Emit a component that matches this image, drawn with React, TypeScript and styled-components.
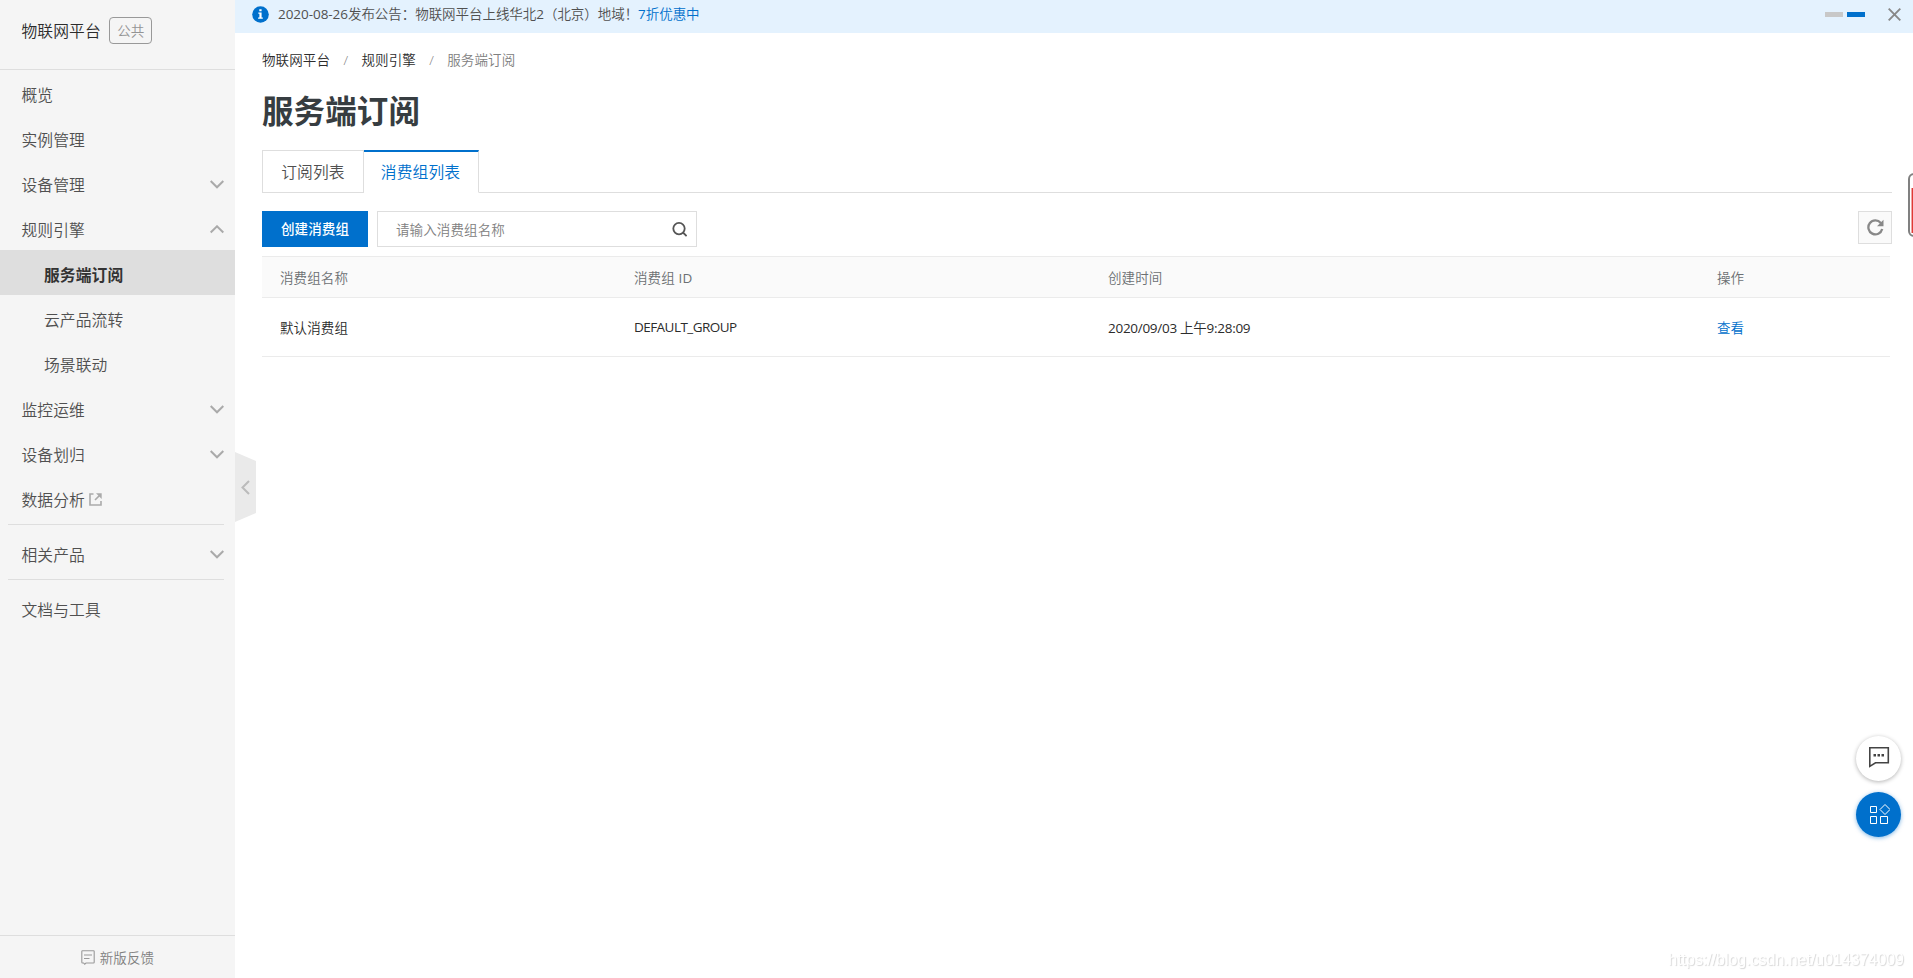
import React from "react";
import styled, { createGlobalStyle, css } from "styled-components";

const Global = createGlobalStyle`
  * { box-sizing: border-box; }
  body { margin: 0; background: #fff; font-family: "Open Sans", "Noto Sans CJK SC", sans-serif; font-size: 13.5px; font-weight: 350; letter-spacing: 0.12px; color: #2c2c2c; overflow: hidden; }
  button { font: inherit; letter-spacing: inherit; }
  svg { display: block; flex: none; }
`;

const Page = styled.div`display: flex; width: 100vw; height: 100vh; overflow: hidden;`;

const Sidebar = styled.aside`
  position: relative; flex: none; width: 235px; height: 100%;
  display: flex; flex-direction: column; background: #f5f5f5;
`;
const Brand = styled.div`
  height: 70px; padding: 0 0 8px 21.5px; border-bottom: 1px solid #dedede;
  display: flex; align-items: center; gap: 8.5px; font-size: 15.75px; white-space: nowrap;
`;
const BrandTag = styled.span`
  width: 43px; height: 27px; border: 1px solid #999; border-radius: 4px; padding-bottom: 1px;
  display: flex; align-items: center; justify-content: center; color: #949494; font-size: 13.5px;
`;
const NavItem = styled.div<{ $sub?: boolean; $active?: boolean }>`
  height: 45px; padding: 5px 11px 0 ${(p) => (p.$sub ? 44 : 21.5)}px;
  display: flex; align-items: center; justify-content: space-between;
  font-size: 15.75px; color: #505050; white-space: nowrap;
  ${(p) => p.$active && css`background: #dedede; color: #333; font-weight: 700;`}
`;
const NavLabel = styled.span`display: flex; align-items: center; gap: 4.5px; padding-bottom: 2px;`;
const NavDivider = styled.div`height: 1px; margin: 4px 11px 5px 8px; background: #dedede;`;
const Feedback = styled.div`
  margin-top: auto; height: 43px; border-top: 1px solid #dedede;
  display: flex; align-items: center; justify-content: center; gap: 5px; color: #808080;
`;
const CollapseHandle = styled.div`
  position: absolute; left: 235px; top: 452px; width: 21px; height: 70px;
  background: #eaeaea; clip-path: polygon(0 0, 100% 13%, 100% 87%, 0 100%);
  display: flex; align-items: center; justify-content: center;
`;

const Main = styled.main`flex: 1; min-width: 0; display: flex; flex-direction: column;`;
const Notice = styled.div`
  height: 33px; background: #e4f2fe; padding: 0 12px 5px 17px;
  display: flex; align-items: center; color: #505050;
`;
const NoticeText = styled.span`margin: -2px 0 0 9px; white-space: nowrap; letter-spacing: -0.05px;`;
const Link = styled.a`color: #0070cc;`;
const Latin = styled.span`font-weight: 400;`;
const Pager = styled.div`margin: 1px 23px 0 auto; display: flex; gap: 4px;`;
const PagerBar = styled.span<{ $on?: boolean }>`
  width: 18px; height: 5px; background: ${(p) => (p.$on ? "#0070cc" : "#c8c8c8")};
`;
const Content = styled.div`padding: 0 21px 0 27px; display: flex; flex-direction: column;`;
const Breadcrumb = styled.nav`
  height: 20px; margin-top: 17px; display: flex; align-items: center; gap: 13.3px; line-height: 20px;
`;
const Faint = styled.span`color: #808080;`;
const Title = styled.h1`
  margin: 18px 0 0; height: 46px; line-height: 46px; font-size: 31.5px; font-weight: 700; color: #373d41;
`;
const Tabs = styled.div`display: flex; height: 43px; margin-top: 16px;`;
const Tab = styled.div<{ $active?: boolean }>`
  display: flex; align-items: center; justify-content: center; padding-bottom: 1px;
  font-size: 15.75px; color: #505050; border: 1px solid #dedede; width: 102px;
  ${(p) => p.$active && css`
    width: 115px; color: #0070cc; border-top: 2px solid #0070cc; border-bottom-color: transparent; border-left: 0; padding: 0 1px 2px 0;
  `}
`;
const TabRest = styled.div`flex: 1; border-bottom: 1px solid #dedede;`;
const Toolbar = styled.div`display: flex; height: 36px; margin-top: 18px; align-items: flex-start;`;
const PrimaryButton = styled.button`
  width: 106px; height: 36px; border: 0; padding: 0 0 2px; background: #0070cc; color: #fff; font-weight: 500;
`;
const SearchBox = styled.div`
  width: 320px; height: 36px; margin-left: 9px; border: 1px solid #dedede; padding: 0 9px 0 18px;
  display: flex; align-items: center; justify-content: space-between; color: #808080;
`;
const RefreshButton = styled.button`
  margin-left: auto; width: 34px; height: 33px; padding: 0; background: #fafafa; border: 1px solid #dedede;
  display: flex; align-items: center; justify-content: center;
`;
const Table = styled.div`margin: 9px 2px 0 0;`;
const Row = styled.div<{ $head?: boolean }>`
  display: grid; grid-template-columns: 354px 474px 609px 1fr; align-items: center;
  height: ${(p) => (p.$head ? 42 : 59)}px; border-bottom: 1px solid #ebebeb;
  ${(p) => p.$head && css`border-top: 1px solid #ebebeb; background: #fafafa; color: #6c7073;`}
`;
const Cell = styled.div<{ $spacing?: number }>`
  padding: 0 18px 0; white-space: nowrap; letter-spacing: ${(p) => p.$spacing ?? 0.12}px;
`;

const FloatStack = styled.div`
  position: fixed; right: 12px; top: 736px; display: flex; flex-direction: column; gap: 11px;
`;
const RoundButton = styled.button<{ $primary?: boolean }>`
  width: 45px; height: 45px; padding: 0; border: 0; border-radius: 50%;
  display: flex; align-items: center; justify-content: center;
  background: ${(p) => (p.$primary ? "#0070cc" : "#fff")};
  box-shadow: 0 1px 4px ${(p) => (p.$primary ? "rgba(0,112,204,.5)" : "rgba(0,0,0,.3)")};
`;
const EdgeWidget = styled.div`
  position: fixed; left: 1908px; top: 173px; width: 30px; height: 64px;
  border: 2px solid #808080; border-radius: 6px; background: #fff; padding: 13px 0 2px 1px;
`;
const EdgeFill = styled.div`height: 45px; background: #e03a35; border-left: 1px solid #efa5a3;`;
const Watermark = styled.div`
  position: fixed; right: 9px; bottom: 8px; font: 16px/20px "Liberation Sans", sans-serif; letter-spacing: -0.03px; color: #fff;
  text-shadow: 1px 1px 1px rgba(0,0,0,.16); white-space: nowrap;
`;

const Chevron = ({ up }: { up?: boolean }) => (
  <svg width="14" height="10" viewBox="0 0 14 10" fill="none" stroke="#aaa" strokeWidth="2">
    <path d={up ? "M.7 7.5 7 1.3 13.3 7.5" : "M.7 1 7 7.3 13.3 1"} />
  </svg>
);
const ExternalIcon = () => (
  <svg width="13" height="13" viewBox="0 0 13 13" fill="none" stroke="#aaa" strokeWidth="1.6">
    <path d="M4.5 1H1v11h11V8M6 7l5-5" />
    <path d="M7 .3h5.7V6z" fill="#aaa" stroke="none" />
  </svg>
);

export default function App() {
  return (
    <>
      <Global />
      <Page>
        <Sidebar>
          <Brand>物联网平台<BrandTag>公共</BrandTag></Brand>
          <NavItem><NavLabel>概览</NavLabel></NavItem>
          <NavItem><NavLabel>实例管理</NavLabel></NavItem>
          <NavItem><NavLabel>设备管理</NavLabel><Chevron /></NavItem>
          <NavItem><NavLabel>规则引擎</NavLabel><Chevron up /></NavItem>
          <NavItem $sub $active><NavLabel>服务端订阅</NavLabel></NavItem>
          <NavItem $sub><NavLabel>云产品流转</NavLabel></NavItem>
          <NavItem $sub><NavLabel>场景联动</NavLabel></NavItem>
          <NavItem><NavLabel>监控运维</NavLabel><Chevron /></NavItem>
          <NavItem><NavLabel>设备划归</NavLabel><Chevron /></NavItem>
          <NavItem><NavLabel>数据分析<ExternalIcon /></NavLabel></NavItem>
          <NavDivider />
          <NavItem><NavLabel>相关产品</NavLabel><Chevron /></NavItem>
          <NavDivider />
          <NavItem><NavLabel>文档与工具</NavLabel></NavItem>
          <Feedback>
            <svg width="14" height="15" viewBox="0 0 14 15" fill="none" stroke="#999" strokeWidth="1.1">
              <path d="M1.5.8h11q.7 0 .7.7v10.8q0 .7-.7.7H5l-1.3 1.2L2.6 13H1.5q-.7 0-.7-.7V1.5q0-.7.7-.7ZM3 5h8M3 8.5h5.5" />
            </svg>
            新版反馈
          </Feedback>
          <CollapseHandle>
            <svg width="9" height="15" viewBox="0 0 9 15" fill="none" stroke="#bbb" strokeWidth="2"><path d="M8 1 1.5 7.5 8 14" /></svg>
          </CollapseHandle>
        </Sidebar>
        <Main>
          <Notice>
            <svg width="17" height="17" viewBox="0 0 17 17">
              <circle cx="8.5" cy="8.5" r="8.3" fill="#0070cc" />
              <path d="M7.3 3.2h2.3v2H7.3zM6.3 6.5h3.3v5h1.2v1.3H6.1v-1.3h1.3V7.8H6.3z" fill="#fff" />
            </svg>
            <NoticeText>
              <Latin>2020-08-26</Latin>发布公告：物联网平台上线华北<Latin>2</Latin>（北京）地域！<Link><Latin>7</Latin>折优惠中</Link>
            </NoticeText>
            <Pager><PagerBar /><PagerBar $on /></Pager>
            <svg width="13" height="13" viewBox="0 0 13 13" stroke="#888" strokeWidth="1.9"><path d="M.7.7l11.6 11.6M12.3.7.7 12.3" /></svg>
          </Notice>
          <Content>
            <Breadcrumb>
              <span>物联网平台</span><Faint>/</Faint><span>规则引擎</span><Faint>/</Faint><Faint>服务端订阅</Faint>
            </Breadcrumb>
            <Title>服务端订阅</Title>
            <Tabs><Tab>订阅列表</Tab><Tab $active>消费组列表</Tab><TabRest /></Tabs>
            <Toolbar>
              <PrimaryButton>创建消费组</PrimaryButton>
              <SearchBox>
                请输入消费组名称
                <svg width="15" height="15" viewBox="0 0 15 15" fill="none" stroke="#555" strokeWidth="1.8"><circle cx="7" cy="6.6" r="5.7" /><path d="m11 10.5 3.600 3.600" /></svg>
              </SearchBox>
              <RefreshButton>
                <svg width="17" height="17" viewBox="0 0 17 17"><path d="M13.8 3.9A7 7 0 1 0 15.2 10" fill="none" stroke="#888" strokeWidth="2.3" /><path d="M16.5.8v6.4H10z" fill="#888" /></svg>
              </RefreshButton>
            </Toolbar>
            <Table>
              <Row $head><Cell>消费组名称</Cell><Cell>消费组 <Latin>ID</Latin></Cell><Cell>创建时间</Cell><Cell>操作</Cell></Row>
              <Row>
                <Cell>默认消费组</Cell>
                <Cell $spacing={-0.55}><Latin>DEFAULT_GROUP</Latin></Cell>
                <Cell $spacing={-0.28}><Latin>2020/09/03 </Latin>上午<Latin>9:28:09</Latin></Cell>
                <Cell><Link>查看</Link></Cell>
              </Row>
            </Table>
          </Content>
        </Main>
      </Page>
      <EdgeWidget><EdgeFill /></EdgeWidget>
      <FloatStack>
        <RoundButton>
          <svg width="23" height="23" viewBox="0 0 23 23" fill="none" stroke="#444" strokeWidth="1.6"><path d="M2.8.8h18.500v15H8.500l-5.700 3.600z" /><path d="M6.500 8.200h2.500M10.500 8.200H13M14.500 8.200H17" strokeWidth="2.4" /></svg>
        </RoundButton>
        <RoundButton $primary>
          <svg width="23" height="23" viewBox="0 0 23 23" fill="none" stroke="#fff" strokeWidth="1"><path d="M3.5 3.5h6v6h-6zM3.5 13.5h6v7h-6zM13.5 13.5h7v7h-7zM18 1.500l5 5-5 5-5-5z" /></svg>
        </RoundButton>
      </FloatStack>
      <Watermark>https://blog.csdn.net/u014374009</Watermark>
    </>
  );
}
